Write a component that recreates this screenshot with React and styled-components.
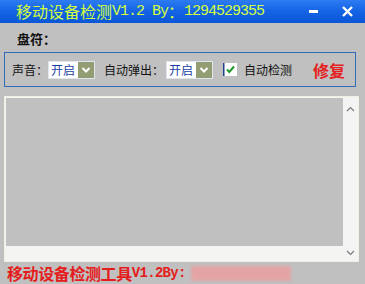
import styled, { createGlobalStyle } from 'styled-components';

const GlobalStyle = createGlobalStyle`
  html, body {
    margin: 0;
    padding: 0;
    background: #c0c0c0;
  }
  body {
    font-family: 'Noto Sans CJK SC', 'Liberation Sans', sans-serif;
  }
`;

const Window = styled.div`
  width: 365px;
  height: 284px;
  background: #c0c0c0;
  display: flex;
  flex-direction: column;
  overflow: hidden;
`;

const TitleBar = styled.div`
  height: 23px;
  flex: none;
  display: flex;
  align-items: center;
  padding-left: 16px;
  background: linear-gradient(#2d7cf2 0%, #1565e6 45%, #0a56d6 100%);
  color: #d4ff3c;
  white-space: pre;
`;

const TitleCjk = styled.span`
  font-family: 'Noto Sans CJK SC', sans-serif;
  font-size: 16px;
  line-height: 23px;
`;

const TitleMono = styled.span`
  font-family: 'Liberation Mono', monospace;
  font-size: 15px;
  letter-spacing: -1px;
  line-height: 23px;
`;

const TitleButtons = styled.div`
  margin-left: auto;
  display: flex;
  align-items: center;
  gap: 24px;
  padding-right: 12px;
`;

const DriveLabel = styled.div`
  margin: 7px 0 0 17px;
  height: 18px;
  font-size: 13px;
  font-weight: bold;
  line-height: 18px;
  color: #111;
`;

const GroupBox = styled.div`
  margin: 4px 0 0 4px;
  width: 343px;
  height: 33px;
  border: 1px solid #2f6cb8;
  display: flex;
  align-items: center;
  padding-left: 7px;
  box-sizing: content-box;
`;

const Label = styled.span`
  font-size: 12px;
  color: #111;
  margin-right: ${(p) => p.$gap || 0}px;
  white-space: nowrap;
`;

const Select = styled.div`
  width: 45px;
  height: 16px;
  background: #fff;
  border: 1px solid #dfe6ee;
  display: flex;
  align-items: center;
  margin-right: ${(p) => p.$gap || 0}px;
`;

const SelectText = styled.span`
  flex: 1;
  font-size: 12px;
  line-height: 16px;
  color: #1b3fa5;
  padding-left: 2px;
`;

const SelectArrow = styled.div`
  width: 16px;
  height: 16px;
  background: #929d74;
  display: flex;
  align-items: center;
  justify-content: center;
`;

const Repair = styled.span`
  margin-left: 21px;
  font-size: 16px;
  font-weight: bold;
  color: #e3201e;
`;

const ListBox = styled.div`
  margin: 9px 0 0 4px;
  width: 353px;
  height: 164px;
  border: 1px solid #eef0e4;
  background: #f4f4f2;
  display: grid;
  grid-template-columns: 1fr 15px;
  grid-template-rows: 1fr 15px;
`;

const ListArea = styled.div`
  background: #c0c0c0;
  margin: 1px 0 0 1px;
`;

const VScroll = styled.div`
  grid-row: 1 / 3;
  grid-column: 2;
  background: #f4f4f4;
  display: flex;
  flex-direction: column;
  justify-content: space-between;
  align-items: center;
  padding: 9px 0 5px;
`;

const Footer = styled.div`
  margin: 2px 0 0 7px;
  display: flex;
  align-items: center;
  height: 18px;
  font-size: 16px;
  font-weight: bold;
  color: #e41c1c;
  letter-spacing: -0.4px;
`;

const FooterMono = styled.span`
  font-family: 'Liberation Mono', monospace;
  font-size: 14px;
  font-weight: bold;
  letter-spacing: -0.7px;
`;

const Redacted = styled.span`
  margin-left: 5px;
  width: 100px;
  height: 15px;
  background: #e4a4a6;
  filter: blur(1.5px);
`;

const Chevron = ({ up }) => (
  <svg width="9" height="6" viewBox="0 0 9 6">
    <path
      d={up ? 'M1 5 L4.5 1.5 L8 5' : 'M1 1 L4.5 4.5 L8 1'}
      fill="none"
      stroke="#7a7a7a"
      strokeWidth="1.2"
    />
  </svg>
);

const DropArrow = () => (
  <svg width="10" height="8" viewBox="0 0 10 8">
    <path d="M1.5 2 L5 5.5 L8.5 2" fill="none" stroke="#fff" strokeWidth="2" />
  </svg>
);

const CheckBox = () => (
  <svg width="14" height="13" viewBox="0 0 14 13" style={{ marginRight: 7 }}>
    <rect x="1" y="0" width="13" height="13" fill="#fff" />
    <rect x="0" y="0" width="1.5" height="13" fill="#1f3f8f" />
    <path d="M4 6.5 L6.3 9 L11 3.5" fill="none" stroke="#1f9a2a" strokeWidth="2" />
  </svg>
);

const App = () => {
  return (
    <>
      <GlobalStyle />
      <Window>
        <TitleBar>
          <TitleCjk>移动设备检测</TitleCjk>
          <TitleMono>V1.2 By</TitleMono>
          <TitleCjk>：</TitleCjk>
          <TitleMono>1294529355</TitleMono>
          <TitleButtons>
            <svg width="9" height="4" viewBox="0 0 9 4">
              <rect x="0" y="0" width="9" height="3" fill="#fff" />
            </svg>
            <svg width="11" height="11" viewBox="0 0 11 11">
              <path d="M1 1 L10 10 M10 1 L1 10" stroke="#fff" strokeWidth="2.4" />
            </svg>
          </TitleButtons>
        </TitleBar>
        <DriveLabel>盘符：</DriveLabel>
        <GroupBox>
          <Label>声音：</Label>
          <Select $gap={9}>
            <SelectText>开启</SelectText>
            <SelectArrow>
              <DropArrow />
            </SelectArrow>
          </Select>
          <Label $gap={2}>自动弹出：</Label>
          <Select $gap={10}>
            <SelectText>开启</SelectText>
            <SelectArrow>
              <DropArrow />
            </SelectArrow>
          </Select>
          <CheckBox />
          <Label>自动检测</Label>
          <Repair>修复</Repair>
        </GroupBox>
        <ListBox>
          <ListArea />
          <VScroll>
            <Chevron up />
            <Chevron />
          </VScroll>
        </ListBox>
        <Footer>
          移动设备检测工具<FooterMono>V1.2By:</FooterMono>
          <Redacted />
        </Footer>
      </Window>
    </>
  );
};

export default App;
